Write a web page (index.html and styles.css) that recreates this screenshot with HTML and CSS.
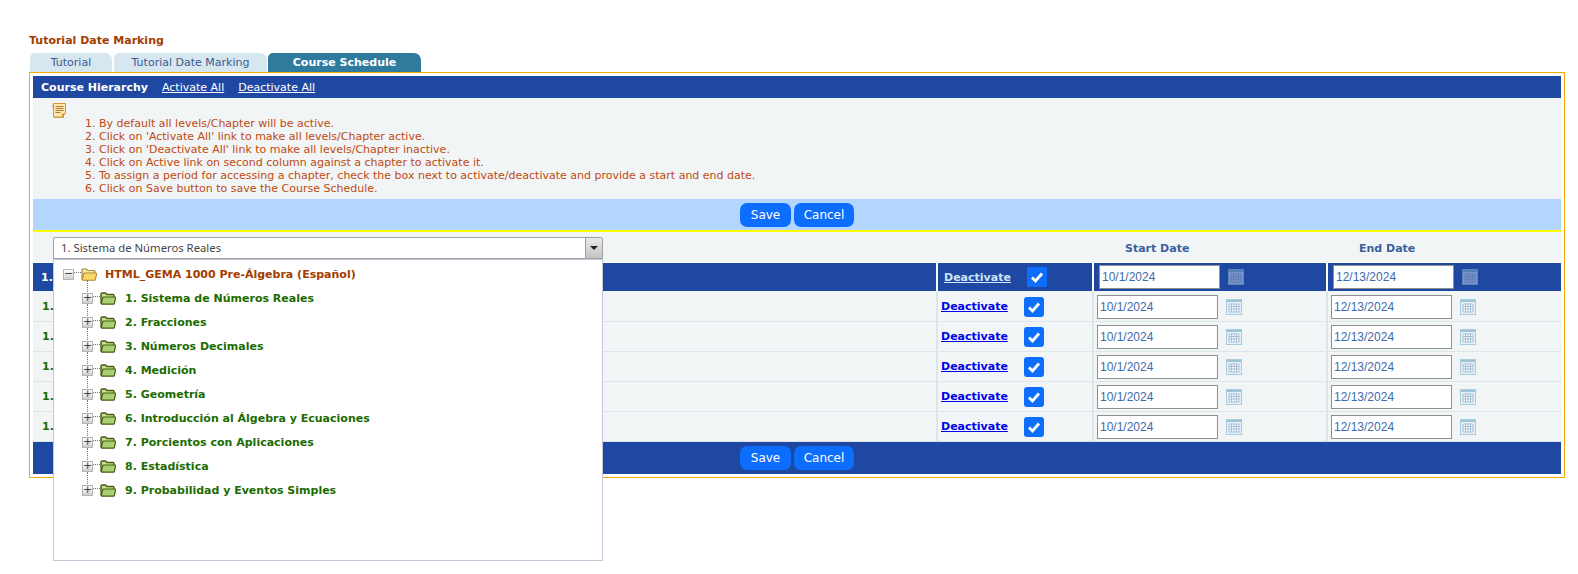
FILE: index.html
```html
<!DOCTYPE html>
<html>
<head>
  <meta charset="UTF-8">
  <title>Tutorial Date Marking</title>
  <link rel="stylesheet" href="styles.css">
</head>
<body>
<svg class="defs" width="0" height="0">
  <symbol id="ico-folder" viewBox="0 0 16 14">
    <path d="M1 12.5V3q0-1 1-1h3.5l1.500 1.500h6q1 0 1 1V6" fill="#c4e08c" stroke="#4a5a10" stroke-width="1.400"/>
    <path d="M1.200 12.600 2.600 7q.2-1 1.200-1H15q.8 0 .6 1l-1.200 5.400q-.2.800-1 .800H2q-.8 0-.8-.6z" fill="#a8d070" stroke="#4a5a10" stroke-width="1.200"/>
  </symbol>
  <symbol id="ico-folder-open" viewBox="0 0 16 14">
    <path d="M1 12.5V3q0-1 1-1h3.500l1.500 1.500h6q1 0 1 1V6" fill="#f8e8a8" stroke="#a88a38" stroke-width="1.200"/>
    <path d="M1.200 12.600 2.600 7q.2-1 1.200-1H15q.8 0 .6 1l-1.200 5.400q-.2.800-1 .800H2q-.8 0-.8-.6z" fill="#fbd766" stroke="#a88a38" stroke-width="1.100"/>
  </symbol>
  <symbol id="ico-cal" viewBox="0 0 16 16">
    <rect x=".5" y=".5" width="15" height="15" fill="#e6f0f6" stroke="#a9cbdc"/>
    <rect x="1" y="1" width="14" height="2" fill="#9cc3d6"/>
    <path d="M3 5h10v8H3z" fill="#fff" stroke="#a5bdd4"/>
    <path d="M5.500 5v8M8 5v8M10.500 5v8M3 7.500h10M3 10h10" stroke="#a5bdd4" fill="none"/>
  </symbol>
  <symbol id="ico-check" viewBox="0 0 20 20">
    <path d="M5 10.500l3.500 3.500L15 6.500" fill="none" stroke="#fff" stroke-width="2.800"/>
  </symbol>
</svg>

<div class="page">
  <h1 class="page-title">Tutorial Date Marking</h1>
  <div class="tabs">
    <a class="tab tab-one">Tutorial</a>
    <a class="tab tab-two">Tutorial Date Marking</a>
    <a class="tab tab-active">Course Schedule</a>
  </div>

  <div class="box">
    <div class="hierarchy-bar">
      <b>Course Hierarchy</b>
      <a href="#">Activate All</a>
      <a href="#">Deactivate All</a>
    </div>

    <div class="notes">
      <svg class="note-icon" width="14" height="15" viewBox="0 0 14 15">
        <path d="M0 2h2v13h10v-2H2z" fill="#b9a98a"/>
        <path d="M1.500.5h12v10l-3.500 3.500h-8.500z" fill="#fde9b0" stroke="#d9952e"/>
        <path d="M10 14v-3.500h3.500z" fill="#d9952e"/>
        <path d="M3.500 3.500h8M3.500 5.500h8M3.500 7.500h8M3.500 9.500h5" stroke="#b07a30" fill="none"/>
      </svg>
      <ol class="note-list">
        <li>By default all levels/Chapter will be active.</li>
        <li>Click on 'Activate All' link to make all levels/Chapter active.</li>
        <li>Click on 'Deactivate All' link to make all levels/Chapter inactive.</li>
        <li>Click on Active link on second column against a chapter to activate it.</li>
        <li>To assign a period for accessing a chapter, check the box next to activate/deactivate and provide a start and end date.</li>
        <li>Click on Save button to save the Course Schedule.</li>
      </ol>
    </div>

    <div class="btn-bar btn-bar-top">
      <button class="btn btn-save">Save</button>
      <button class="btn btn-cancel">Cancel</button>
    </div>

    <table class="sched">
      <colgroup>
        <col class="col-name"><col class="col-act"><col class="col-date"><col class="col-date2">
      </colgroup>
      <tr class="head-row">
        <th>
          <div class="combo">
            <div class="combo-value">1. Sistema de Números Reales</div>
            <div class="combo-arrow"></div>
            <div class="combo-panel">
              <div class="tree-root">
                <span class="toggle">&minus;</span><span class="dash"></span>
                <svg class="folder"><use href="#ico-folder-open"/></svg>
                <span class="root-name">HTML_GEMA 1000 Pre-Álgebra (Español)</span>
              </div>
              <ul class="tree">
                <li><span class="toggle">+</span><span class="dash"></span><svg class="folder"><use href="#ico-folder"/></svg><span>1. Sistema de Números Reales</span></li>
                <li><span class="toggle">+</span><span class="dash"></span><svg class="folder"><use href="#ico-folder"/></svg><span>2. Fracciones</span></li>
                <li><span class="toggle">+</span><span class="dash"></span><svg class="folder"><use href="#ico-folder"/></svg><span>3. Números Decimales</span></li>
                <li><span class="toggle">+</span><span class="dash"></span><svg class="folder"><use href="#ico-folder"/></svg><span>4. Medición</span></li>
                <li><span class="toggle">+</span><span class="dash"></span><svg class="folder"><use href="#ico-folder"/></svg><span>5. Geometría</span></li>
                <li><span class="toggle">+</span><span class="dash"></span><svg class="folder"><use href="#ico-folder"/></svg><span>6. Introducción al Álgebra y Ecuaciones</span></li>
                <li><span class="toggle">+</span><span class="dash"></span><svg class="folder"><use href="#ico-folder"/></svg><span>7. Porcientos con Aplicaciones</span></li>
                <li><span class="toggle">+</span><span class="dash"></span><svg class="folder"><use href="#ico-folder"/></svg><span>8. Estadística</span></li>
                <li><span class="toggle">+</span><span class="dash"></span><svg class="folder"><use href="#ico-folder"/></svg><span>9. Probabilidad y Eventos Simples</span></li>
              </ul>
            </div>
          </div>
        </th>
        <th></th>
        <th class="date-head">Start Date</th>
        <th class="date-head">End Date</th>
      </tr>
      <tr class="row-main">
        <td class="name">1.</td>
        <td><div class="act"><a href="#">Deactivate</a><span class="check"><svg width="20" height="20"><use href="#ico-check"/></svg></span></div></td>
        <td><div class="date"><input value="10/1/2024"><svg class="cal" width="16" height="16"><use href="#ico-cal"/></svg></div></td>
        <td><div class="date"><input value="12/13/2024"><svg class="cal" width="16" height="16"><use href="#ico-cal"/></svg></div></td>
      </tr>
      <tr>
        <td class="name">1.</td>
        <td><div class="act"><a href="#">Deactivate</a><span class="check"><svg width="20" height="20"><use href="#ico-check"/></svg></span></div></td>
        <td><div class="date"><input value="10/1/2024"><svg class="cal" width="16" height="16"><use href="#ico-cal"/></svg></div></td>
        <td><div class="date"><input value="12/13/2024"><svg class="cal" width="16" height="16"><use href="#ico-cal"/></svg></div></td>
      </tr>
      <tr>
        <td class="name">1.</td>
        <td><div class="act"><a href="#">Deactivate</a><span class="check"><svg width="20" height="20"><use href="#ico-check"/></svg></span></div></td>
        <td><div class="date"><input value="10/1/2024"><svg class="cal" width="16" height="16"><use href="#ico-cal"/></svg></div></td>
        <td><div class="date"><input value="12/13/2024"><svg class="cal" width="16" height="16"><use href="#ico-cal"/></svg></div></td>
      </tr>
      <tr>
        <td class="name">1.</td>
        <td><div class="act"><a href="#">Deactivate</a><span class="check"><svg width="20" height="20"><use href="#ico-check"/></svg></span></div></td>
        <td><div class="date"><input value="10/1/2024"><svg class="cal" width="16" height="16"><use href="#ico-cal"/></svg></div></td>
        <td><div class="date"><input value="12/13/2024"><svg class="cal" width="16" height="16"><use href="#ico-cal"/></svg></div></td>
      </tr>
      <tr>
        <td class="name">1.</td>
        <td><div class="act"><a href="#">Deactivate</a><span class="check"><svg width="20" height="20"><use href="#ico-check"/></svg></span></div></td>
        <td><div class="date"><input value="10/1/2024"><svg class="cal" width="16" height="16"><use href="#ico-cal"/></svg></div></td>
        <td><div class="date"><input value="12/13/2024"><svg class="cal" width="16" height="16"><use href="#ico-cal"/></svg></div></td>
      </tr>
      <tr>
        <td class="name">1.</td>
        <td><div class="act"><a href="#">Deactivate</a><span class="check"><svg width="20" height="20"><use href="#ico-check"/></svg></span></div></td>
        <td><div class="date"><input value="10/1/2024"><svg class="cal" width="16" height="16"><use href="#ico-cal"/></svg></div></td>
        <td><div class="date"><input value="12/13/2024"><svg class="cal" width="16" height="16"><use href="#ico-cal"/></svg></div></td>
      </tr>
    </table>

    <div class="btn-bar btn-bar-bottom">
      <button class="btn btn-save">Save</button>
      <button class="btn btn-cancel">Cancel</button>
    </div>
  </div>
</div>
</body>
</html>
```

FILE: styles.css
```css
body {
  margin: 0;
  min-height: 574px;
  background-color: #ffffff;
  font-family: "DejaVu Sans", Verdana, sans-serif;
  font-size: 11px;
}

.defs {
  position: absolute;
}

.page {
  padding: 34px 13px 0 29px;
}

.page-title {
  margin: 0 0 5px;
  height: 14px;
  line-height: 14px;
  font-size: 11px;
  font-weight: bold;
  color: #a33c00;
}

.tabs {
  display: flex;
  height: 19px;
  padding-left: 1px;
  gap: 2px;
}

.tab {
  height: 19px;
  line-height: 20px;
  text-align: center;
  background-color: #d6e7ef;
  color: #3a5a94;
  border-radius: 5px 7px 0 0;
}

.tab-one {
  width: 82px;
}

.tab-two {
  width: 153px;
}

.tab-active {
  width: 153px;
  margin-left: -1px;
  background-color: #2e7b9d;
  color: #ffffff;
  font-weight: bold;
}

.box {
  height: 398px;
  padding: 3px;
  border: 1px solid #f5a800;
}

.hierarchy-bar {
  display: flex;
  align-items: center;
  height: 22px;
  padding-left: 8px;
  gap: 14px;
  background-color: #1f48a2;
  color: #ffffff;
}

.hierarchy-bar a {
  color: #ffffff;
}

.notes {
  position: relative;
  height: 101px;
  background-color: #f1f5f6;
}

.note-icon {
  position: absolute;
  left: 19px;
  top: 5px;
}

.note-list {
  margin: 0;
  padding: 19px 0 0 66px;
  line-height: 13px;
  color: #bf4a10;
}

.btn-bar {
  display: flex;
  align-items: center;
  justify-content: center;
  gap: 3px;
}

.btn-bar-top {
  height: 31px;
  background-color: #b3d6ff;
  border-bottom: 2px solid #ffff00;
}

.btn-bar-bottom {
  height: 32px;
  background-color: #1f48a2;
}

.btn {
  height: 24px;
  padding: 0;
  border: 0;
  border-radius: 7px;
  background-color: #0d6efd;
  color: #ffffff;
  font-family: "DejaVu Sans", Verdana, sans-serif;
  font-size: 12px;
}

.btn-save {
  width: 51px;
}

.btn-cancel {
  width: 60px;
}

.sched {
  width: 1528px;
  table-layout: fixed;
  border-collapse: separate;
  border-spacing: 0;
  background-color: #f1f5f6;
}

.col-name {
  width: 903px;
}

.col-act {
  width: 156px;
}

.col-date {
  width: 234px;
}

.col-date2 {
  width: 235px;
}

.head-row th {
  box-sizing: border-box;
  height: 31px;
  padding: 5px 0 0;
  vertical-align: top;
  text-align: left;
  border-bottom: 1px solid #ffffff;
}

.head-row .date-head {
  padding-top: 10px;
  padding-left: 33px;
  color: #3a5f9e;
  font-size: 11px;
}

td {
  height: 29px;
  padding: 0;
  border-bottom: 1px solid #dce6e9;
  border-left: 2px solid #dce6e9;
}

td.name {
  padding-left: 9px;
  border-left: 0;
  color: #1c6b00;
  font-weight: bold;
}

.act {
  display: flex;
  align-items: center;
  padding-left: 3px;
}

.act a {
  width: 83px;
  color: #0000ee;
  font-weight: bold;
}

.check {
  width: 20px;
  height: 20px;
  border-radius: 3px;
  background-color: #0d6efd;
}

.date {
  display: flex;
  align-items: center;
  gap: 8px;
  padding-left: 3px;
}

.date input {
  box-sizing: border-box;
  width: 121px;
  height: 24px;
  padding: 0 2px;
  border: 1px solid #8f8f8f;
  font-family: "Liberation Sans", Arial, sans-serif;
  font-size: 12px;
  color: #3f6aa8;
}

.row-main td {
  height: 28px;
  background-color: #1f48a2;
  border-bottom: 1px solid #f1f5f6;
  border-left-color: #ffffff;
}

.row-main td.name {
  padding-left: 8px;
  color: #ffffff;
}

.row-main .act {
  padding-left: 6px;
}

.row-main .act a {
  color: #cfe4fa;
}

.row-main .check {
  border-radius: 1px;
}

.row-main .date {
  padding-left: 5px;
}

.row-main .cal {
  opacity: .45;
}

.combo {
  position: relative;
  display: flex;
  box-sizing: border-box;
  width: 550px;
  height: 23px;
  margin-left: 20px;
  border: 1px solid #a0a0a0;
  border-bottom-width: 2px;
  border-radius: 2px;
  background-color: #ffffff;
}

.combo-value {
  flex: 1;
  padding-left: 7px;
  line-height: 20px;
  font-family: "Noto Sans", sans-serif;
  font-size: 11.3px;
  font-weight: normal;
  color: #444444;
}

.combo-arrow {
  position: relative;
  width: 16px;
  border-left: 1px solid #a0a0a0;
  background: linear-gradient(#e8e8e8, #c4c4c4);
}

.combo-arrow:after {
  content: "";
  position: absolute;
  left: 4px;
  top: 8px;
  border-top: 4px solid #222222;
  border-left: 4px solid transparent;
  border-right: 4px solid transparent;
}

.combo-panel {
  position: absolute;
  z-index: 5;
  left: -1px;
  top: 21px;
  box-sizing: border-box;
  width: 550px;
  height: 302px;
  padding: 1px 0 0 9px;
  border: 1px solid #c6c6d8;
  background-color: #ffffff;
}

.tree-root {
  display: flex;
  align-items: center;
  height: 24px;
  margin-top: 1px;
  font-weight: bold;
  color: #a33c00;
}

.root-name {
  margin-left: 8px;
}

.toggle {
  box-sizing: border-box;
  width: 11px;
  height: 11px;
  line-height: 8px;
  text-align: center;
  border: 1px solid #b5b5b5;
  background: linear-gradient(#ffffff, #d0d0d0);
  color: #444444;
  font-size: 11px;
  font-weight: normal;
}

.dash {
  width: 7px;
  margin-top: -4px;
  border-top: 1px dotted #777777;
}

.folder {
  width: 16px;
  height: 14px;
}

.tree {
  margin: 0;
  padding: 0 0 0 19px;
  list-style: none;
  font-weight: bold;
  color: #1c6b00;
}

.tree li {
  position: relative;
  display: flex;
  align-items: center;
  height: 24px;
}

.tree li:before {
  content: "";
  position: absolute;
  left: 5px;
  top: -6px;
  height: 24px;
  border-left: 1px dotted #777777;
}

.tree li:last-child:before {
  height: 12px;
}

.tree li span:last-child {
  margin-left: 9px;
}

.tree .toggle {
  position: relative;
}
```
